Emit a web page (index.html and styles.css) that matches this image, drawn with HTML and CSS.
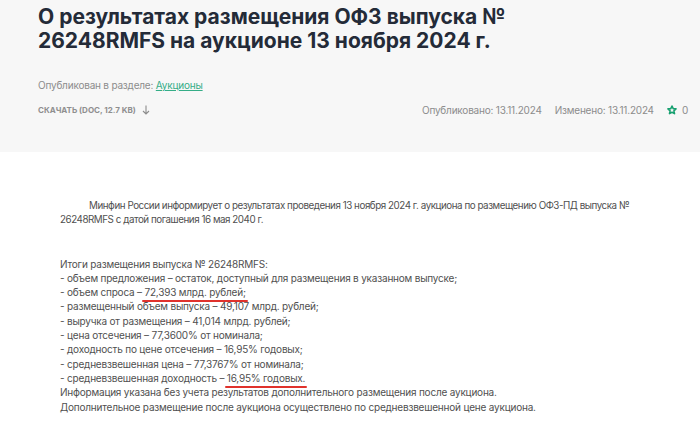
FILE: index.html
```html
<!DOCTYPE html>
<html lang="ru">
<head>
<meta charset="utf-8">
<link rel="stylesheet" href="styles.css">
</head>
<body>
<header class="head">
  <h1 class="title">О результатах размещения ОФЗ выпуска №<br>26248RMFS на аукционе 13 ноября 2024 г.</h1>
  <div class="section">Опубликован в разделе: <a class="link" href="#">Аукционы</a></div>
  <div class="bar">
    <div class="download">СКАЧАТЬ (DOC, 12.7 KB)
      <svg class="arrow" width="8" height="10" viewBox="0 0 8 10"><path d="M4 0.5V9M1 6l3 3 3-3" fill="none" stroke="#8d8d8d" stroke-width="1.1"/></svg>
    </div>
    <div class="meta">
      <span>Опубликовано: 13.11.2024</span>
      <span>Изменено: 13.11.2024</span>
      <span class="fav"><svg class="star" width="10" height="10" viewBox="0 0 10 10"><path d="M5 1l1.2 2.6 2.8.3-2.1 1.9.6 2.8L5 7.2 2.5 8.6l.6-2.8L1 3.9l2.8-.3z" fill="none" stroke="#18a070" stroke-width="1.6" stroke-linejoin="round"/></svg>0</span>
    </div>
  </div>
</header>
<main class="content">
  <p class="lead">Минфин России информирует о результатах проведения 13 ноября 2024 г. аукциона по размещению ОФЗ-ПД выпуска №<br>26248RMFS с датой погашения 16 мая 2040 г.</p>
  <p class="list">Итоги размещения выпуска № 26248RMFS:<br>
  - объем предложения – остаток, доступный для размещения в указанном выпуске;<br>
  - объем спроса – <span class="mark">72,393 млрд. рублей;</span><br>
  - размещенный объем выпуска – 49,107 млрд. рублей;<br>
  - выручка от размещения – 41,014 млрд. рублей;<br>
  - цена отсечения – 77,3600% от номинала;<br>
  - доходность по цене отсечения – 16,95% годовых;<br>
  - средневзвешенная цена – 77,3767% от номинала;<br>
  - средневзвешенная доходность – <span class="mark">16,95% годовых.</span><br>
  Информация указана без учета результатов дополнительного размещения после аукциона.<br>
  Дополнительное размещение после аукциона осуществлено по средневзвешенной цене аукциона.</p>
</main>
</body>
</html>
```
FILE: styles.css
```css
html, body {
  margin: 0;
  padding: 0;
  background: #ffffff;
  font-family: "Inter", "Liberation Sans", sans-serif;
}
.head {
  background: #f7f7f7;
  height: 152px;
  box-sizing: border-box;
  padding: 5px 12px 0 38px;
}
.title {
  margin: 0;
  font-size: 21px;
  line-height: 24px;
  font-weight: 700;
  color: #242b38;
}
.section {
  margin-top: 26px;
  font-size: 10px;
  letter-spacing: -0.2px;
  color: #8c8c8c;
}
.link {
  color: #35ad87;
  text-decoration: underline;
}
.bar {
  margin-top: 13px;
  display: flex;
  justify-content: space-between;
  align-items: center;
}
.download {
  font-size: 8px;
  font-weight: 700;
  color: #8f8f8f;
  display: flex;
  align-items: center;
  gap: 6px;
}
.meta {
  display: flex;
  align-items: center;
  gap: 13px;
  font-size: 10px;
  letter-spacing: -0.2px;
  color: #8c8c8c;
}
.fav {
  display: flex;
  align-items: center;
  gap: 5px;
}
.content {
  padding: 47px 20px 0 60px;
  font-size: 10px;
  letter-spacing: -0.2px;
  line-height: 14.3px;
  color: #505050;
}
.content p {
  margin: 0;
}
.lead {
  text-indent: 29px;
  font-size: 9.8px;
  letter-spacing: -0.45px;
}
.list {
  margin-top: 29px !important;
}
.mark {
  position: relative;
}
.mark::after {
  content: "";
  position: absolute;
  left: -2px;
  right: -2px;
  bottom: -4px;
  height: 2px;
  border-radius: 1px;
  background: #e0322c;
}
```
